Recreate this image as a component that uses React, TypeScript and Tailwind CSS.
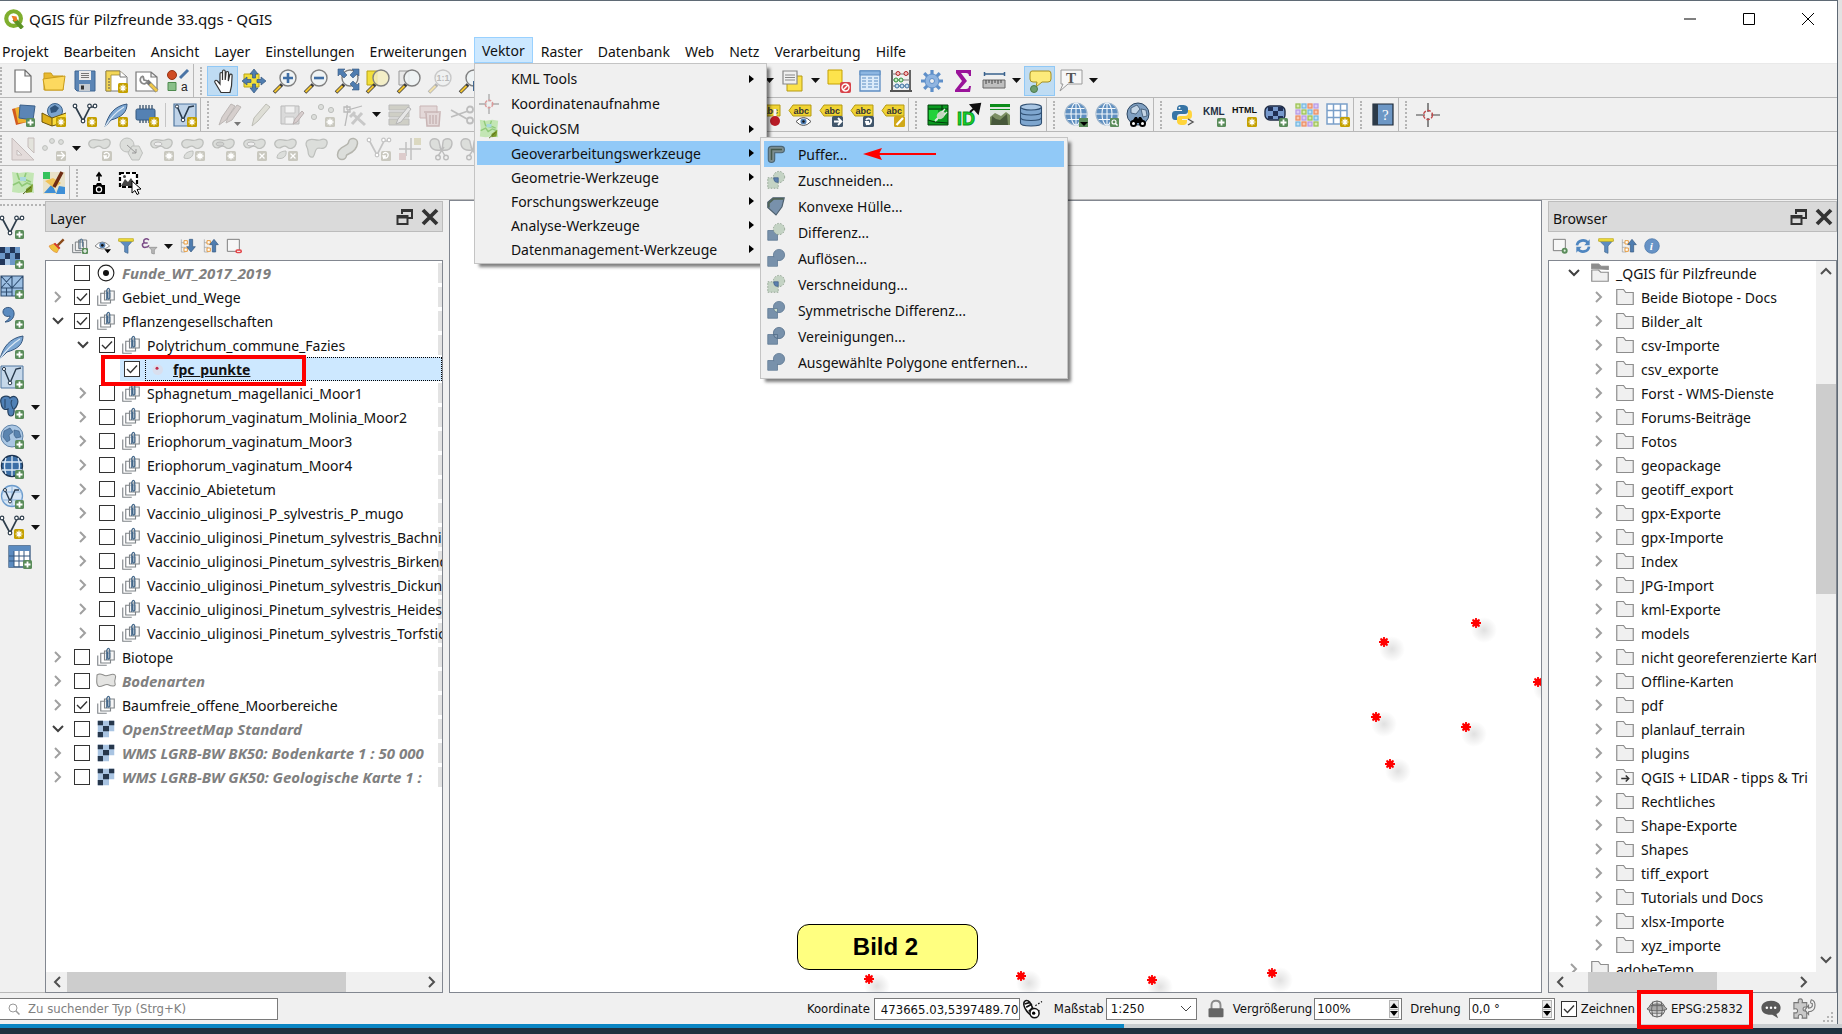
import React from 'react';

const Plus = () => (
  <g>
    <rect x="15" y="15" width="9" height="9" rx="1.5" fill="#5a8c5a" />
    <path d="M19.5 16.5v6M16.5 19.5h6" stroke="#fff" strokeWidth="1.8" />
  </g>
);

const Spark = () => (
  <g>
    <rect x="14" y="14" width="10" height="10" rx="1.5" fill="#c4a000" />
    <path d="M19 15.5v7M15.5 19h7M16.6 16.6l4.8 4.8M21.4 16.6l-4.8 4.8" stroke="#fff" strokeWidth="1.2" />
  </g>
);

const Lens = ({ fill = '#eef3f5' }: { fill?: string }) => (
  <g>
    <path d="M1 23.5l8-8" stroke="#3b3b3b" strokeWidth="3.6" />
    <path d="M1.500 23l6-6" stroke="#f0c330" strokeWidth="2.2" />
    <circle cx="15" cy="9" r="8" fill={fill} fillOpacity="0.85" stroke="#808080" strokeWidth="1.4" />
  </g>
);

const Globe = () => (
  <g fill="none" stroke="#f2f7fb" strokeWidth="1.1">
    <circle cx="12" cy="11" r="11" fill="#5f8fc0" stroke="#9fb6cc" />
    <ellipse cx="12" cy="11" rx="5" ry="11" />
    <path d="M12 0v22M1 11h22M3.500 5.500h17M3.500 16.500h17" />
  </g>
);

const Abc = () => (
  <g>
    <path d="M1 7.5L5 2h18v11H5z" fill="#f0d333" stroke="#b59a12" />
    <text x="5.5" y="11" fontSize="9" fontWeight="bold" fontFamily="Liberation Sans, sans-serif" fill="#333">abc</text>
  </g>
);

const Nodes = ({ color = '#2f3e4c' }: { color?: string }) => (
  <g fill="#fff" stroke={color} strokeWidth="1.2">
    <path d="M2 3l8 15L17 4h4" fill="none" strokeWidth="1.7" />
    <circle cx="2" cy="3" r="1.8" />
    <circle cx="10" cy="18" r="1.8" />
    <circle cx="16.500" cy="3" r="1.8" />
    <circle cx="22" cy="3" r="1.8" />
  </g>
);

const Blob = () => (
  <path d="M2 4c4-4 8 1 13-1 5-2 8 0 7 4s-6 6-9 3-5 1-8 1-6-4-3-7z" fill="#dcdedb" stroke="#bdbfbc" strokeWidth="1.2" />
);

const GrayBadge = ({ mark = 'M19 15.5v7M15.5 19h7M16.6 16.6l4.8 4.8M21.4 16.6l-4.8 4.8' }: { mark?: string }) => (
  <g>
    <rect x="14" y="14" width="10" height="10" rx="1.5" fill="#c9c8bf" stroke="none" />
    <path d={mark} stroke="#fff" strokeWidth="1.3" fill="none" />
  </g>
);

const DarkBadge = ({ mark }: { mark: string }) => (
  <g>
    <rect x="13" y="13" width="11" height="11" rx="1.5" fill="#41566b" />
    <path d={mark} stroke="#fff" strokeWidth="1.8" fill="none" />
  </g>
);

const OsmMap = () => (
  <g>
    <path d="M1 1l7 1 8-1 7 1-1 10 1 10-8-1-7 1-7-1 1-10z" fill="#c3e6b4" />
    <path d="M2 14l6-3 3 4 5-3 5 2M6 2l2 6 7 2M15 2l-2 6 7 3" stroke="#8fc978" fill="none" strokeWidth="1.6" />
    <path d="M9 6h6v4H9z" fill="#a9d8dd" />
    <path d="M15 18l7-5-1 8-6 1z" fill="#7a9a2a" />
    <path d="M12 23l8-7" stroke="#4f6618" />
  </g>
);

const Square = () => <path d="M1 10h13v13H1z" fill="#7891ab" stroke="#5b7590" />;

const xMark = 'M16.5 16.5l5 5M21.5 16.5l-5 5';
const arrowMark = 'M15 18.5h7M19 15l3.5 3.5L19 22';
const turnMark = 'M16 17c2-3 6-1 5 2s-3 2-4 1M17 22l-1-3 3 0';

const icons: Record<string, React.ReactNode> = {
  newFile: <path d="M4 1h10l6 6v16H4zM14 1v6h6" fill="#fff" stroke="#6e6e6e" strokeWidth="1.2" />,
  open: (
    <g stroke="#c99c1c">
      <path d="M2 21V4h7l2 3h10V21z" fill="#e8b92f" />
      <path d="M1 10l22-3-2 14H3z" fill="#fcd95f" />
    </g>
  ),
  save: (
    <g>
      <path d="M2 2h20v20H4l-2-2z" fill="#5b85b5" stroke="#3e6491" />
      <path d="M6 2h12v9H6z" fill="#ececec" />
      <path d="M8 4.5h8M8 6.5h8M8 8.5h8" stroke="#777" />
      <path d="M6 15h11v7H6z" fill="#c5cbd2" />
      <path d="M8 16.5h3v4H8z" fill="#333" />
    </g>
  ),
  layout: (
    <g>
      <path d="M2 2h14l7 6v14H2z" fill="#fff" stroke="#777" />
      <path d="M2 2h14l3 4H7v16H2z" fill="#f3d657" stroke="#9a8630" strokeWidth="0.8" />
      <path d="M16 2v6h6" fill="#fff" stroke="#777" />
      <path d="M4 10h2M4 13h2M4 16h2M4 19h2" stroke="#555" />
      <Spark />
    </g>
  ),
  layoutManager: (
    <g>
      <path d="M1 3h15l6 5v14H1zM16 3v5h6" fill="#fff" stroke="#777" strokeWidth="1.2" />
      <path d="M12 12l10 10" stroke="#777" strokeWidth="4" />
      <path d="M15 15l7 7" stroke="#edc64a" strokeWidth="3" />
      <path d="M8 7a4 4 0 1 0 5 5M8 7l1 4 4 1" fill="none" stroke="#888" strokeWidth="1.8" />
    </g>
  ),
  style: (
    <g>
      <circle cx="6" cy="6" r="4.5" fill="#cf4b22" stroke="#963313" />
      <path d="M14 9l8-8" stroke="#4a74a6" strokeWidth="3" />
      <path d="M2 13.5h8v8H2z" fill="#8abf8a" stroke="#4e8a4e" />
      <text x="15" y="22" fontSize="12" fontFamily="Liberation Sans, sans-serif" fill="#222">a</text>
    </g>
  ),
  hand: (
    <path
      d="M10 23.500l-6-10c-1-2 1-3 2.500-1.500L9 15V5c0-2 2.500-2 2.500 0v6V2.500c0-2 2.700-2 2.700 0V11l.8-7c0-2 2.600-2 2.600 0l-.3 8 1.400-6c.5-1.500 2.600-1 2.400.5L20.500 17 19 23.500z"
      fill="#fff"
      stroke="#333"
      strokeWidth="1.2"
    />
  ),
  panTo: (
    <g>
      <path d="M2 5h15v13H2z" fill="#f2df3a" stroke="#b9a415" />
      <path d="M12 0l4 5h-2.500v4h-3V5H8zM12 24l4-5h-2.500v-4h-3v4H8zM0 12l5-4v2.500h4v3H5V16zM24 12l-5-4v2.500h-4v3h4V16z" fill="#4f7db0" stroke="#35577f" strokeWidth="0.7" />
    </g>
  ),
  zoomIn: (
    <g>
      <Lens />
      <path d="M15 4v10M10 9h10" stroke="#3f6ea5" strokeWidth="2.6" />
    </g>
  ),
  zoomOut: (
    <g>
      <Lens />
      <path d="M10 9h10" stroke="#3f6ea5" strokeWidth="2.6" />
    </g>
  ),
  zoomFull: (
    <g>
      <Lens />
      <path d="M3 0h7L8 2l4 4-3 3-4-4-2 2zM24 0h-7l2 2-4 4 3 3 4-4 2 2zM24 21h-7l2-2-4-4 3-3 4 4 2-2z" fill="#4f7db0" stroke="#35577f" strokeWidth="0.6" />
    </g>
  ),
  zoomSelection: (
    <g>
      <path d="M1 2h10v14H1z" fill="#f2df3a" stroke="#b9a415" />
      <Lens fill="#f3edc0" />
    </g>
  ),
  zoomLayer: (
    <g>
      <path d="M2 2h10v14H2z" fill="#e8e8e8" stroke="#999" />
      <Lens />
    </g>
  ),
  zoomNative: (
    <g opacity="0.35">
      <Lens />
      <text x="8.500" y="12" fontSize="9" fontWeight="bold" fontFamily="Liberation Sans, sans-serif" fill="#555">1:1</text>
    </g>
  ),
  zoomLast: (
    <g>
      <Lens />
      <path d="M14 12h10v10H14z" fill="#41668f" />
    </g>
  ),
  mapTheme: (
    <g>
      <path d="M6 7h15v15H6z" fill="#fbe24a" stroke="#b59a12" />
      <path d="M2 2h14v13H2z" fill="#f0f0f0" stroke="#888" strokeWidth="1.2" />
      <path d="M4 6h10M4 8.500h10M4 11h10" stroke="#888" />
    </g>
  ),
  deselect: (
    <g>
      <path d="M1 1h14v14H1z" fill="#fde34c" stroke="#c4a000" />
      <rect x="13" y="13" width="11" height="11" rx="2" fill="#d8434a" />
      <circle cx="18.500" cy="18.500" r="3.500" fill="none" stroke="#fff" strokeWidth="1.4" />
      <path d="M16 21l5-5" stroke="#fff" strokeWidth="1.4" />
    </g>
  ),
  table: (
    <g stroke="#5d8dc2">
      <path d="M2 2h20v20H2z" fill="#dcebfa" strokeWidth="1.3" />
      <path d="M2 2h20v4H2z" fill="#8db6e2" />
      <path d="M4 9h4M4 12h4M4 15h4M4 18h4M10 9h4M10 12h4M10 15h4M10 18h4M16 9h4M16 12h4M16 15h4M16 18h4" />
    </g>
  ),
  abacus: (
    <g>
      <path d="M3 1v21M21 1v21M1 22h22" stroke="#555" strokeWidth="1.8" />
      <path d="M3 5h18M3 11h18M3 17h18" stroke="#777" />
      <g fill="#f3c1c1" stroke="#b02525">
        <circle cx="9" cy="4.500" r="2" /><circle cx="17" cy="4.500" r="2" />
      </g>
      <g fill="#c7ebc7" stroke="#2e8f3a">
        <circle cx="7" cy="11" r="2" /><circle cx="12" cy="11" r="2" />
      </g>
      <g fill="#c3dcf0" stroke="#3b6f9e">
        <circle cx="8" cy="17" r="2" /><circle cx="13" cy="17" r="2" /><circle cx="18" cy="17" r="2" />
      </g>
    </g>
  ),
  gear: (
    <g stroke="#5e8fc9">
      <path d="M12 1v22M1 12h22M4.200 4.200l15.600 15.600M19.800 4.200L4.200 19.800" strokeWidth="3.2" />
      <circle cx="12" cy="12" r="7" fill="#8fb4e0" />
      <circle cx="12" cy="12" r="2.500" fill="#efefef" />
    </g>
  ),
  sigma: <path d="M5 1h15v6h-2c0-2-1-3-3-3h-5l6 8-7 8h6c2 0 3-1 3-3h2l-1 6H4v-2l7-9-6-8z" fill="#9a139a" />,
  ruler: (
    <g>
      <path d="M2 5h21M2.500 3v4M22.500 3v4" stroke="#39618c" strokeWidth="1.5" />
      <path d="M1 11h22v8H1z" fill="#bfbfbf" stroke="#666" />
      <path d="M4 11v4M7 11v3M10 11v4M13 11v3M16 11v4M19 11v3" stroke="#444" />
    </g>
  ),
  mapTips: (
    <g>
      <path d="M4 2h17q2 0 2 3v5q0 3-3 3h-6l-6 5 1-5H5q-3 0-3-3V5q0-3 2-3z" fill="#fdeb7b" stroke="#a58e21" />
      <circle cx="6" cy="20" r="3.5" fill="#6e9e6e" stroke="#4c7a4c" />
    </g>
  ),
  annotation: (
    <g>
      <path d="M2 1h21v14H9l-8 7 3-7H2z" fill="#f7f7f7" stroke="#9a9a9a" />
      <text x="7" y="13.500" fontSize="15" fontWeight="bold" fontFamily="Liberation Serif, serif" fill="#555">T</text>
    </g>
  ),

  dataSource: (
    <g>
      <path d="M1 6l12-3 3 16-11 3z" fill="#d35a1f" />
      <path d="M4 5l12-2 2 16-11 1z" fill="#eeb32e" />
      <path d="M9 2l15 1-2 14-14-2z" fill="#5b85b5" stroke="#3b5f88" />
      <Plus />
    </g>
  ),
  geopackage: (
    <g>
      <circle cx="13" cy="8" r="7.500" fill="#7ba3cd" stroke="#3c638d" />
      <path d="M8 5l5-3 4 3-3 4-5 1z" fill="#31557c" />
      <path d="M0 10l10 5v8L0 19z" fill="#dfb01a" />
      <path d="M10 15l14-5v9l-14 4z" fill="#fbdc3e" />
      <path d="M0 10l10 5 14-5M10 15v8M0 10v9l10 4 14-4" stroke="#6d5508" fill="none" />
      <Spark />
    </g>
  ),
  newShape: <g><Nodes /><Spark /></g>,
  spatialite: (
    <g>
      <path d="M1 24C4 12 10 3 23 1c0 8-5 13-16 16z" fill="#7ea8d3" stroke="#35577f" />
      <path d="M1 24C6 15 12 9 20 4" stroke="#dce9f5" fill="none" strokeWidth="1.2" />
      <Spark />
    </g>
  ),
  memory: (
    <g>
      <path d="M5 2v18M8 2v18M11 2v18M14 2v18M17 2v18" stroke="#37516b" strokeWidth="1.3" />
      <rect x="1" y="6" width="19" height="11" rx="1.500" fill="#5481b3" stroke="#34597f" />
      <Spark />
    </g>
  ),
  virtual: (
    <g>
      <path d="M1 1h22v22H1z" fill="#bfd3e8" stroke="#50779f" strokeWidth="1.2" />
      <path d="M4 3l6 14L16 4l5-1" fill="none" stroke="#27394c" strokeWidth="1.6" />
      <circle cx="4" cy="3.500" r="1.600" fill="#fff" stroke="#27394c" />
      <circle cx="10" cy="17" r="1.800" fill="#fff" stroke="#27394c" />
      <Spark />
    </g>
  ),
  pencils: (
    <g>
      <path d="M1 22l3-8L13 1l4 2-9 14zM8 20l2-6L19 2l4 2-9 13z" fill="#d6cfcd" stroke="#bcb7b5" />
      <path d="M16 19h7l-3.500 4z" fill="#777" />
    </g>
  ),
  pencil: <path d="M3 23l2-8L17 1l4 3L9 18z" fill="#deded6" stroke="#bdbdb5" />,
  saveEdits: (
    <g>
      <path d="M1 3h18v18H1z" fill="#dadada" stroke="#b9b9b9" />
      <path d="M5 3h10v7H5zM5 14h9v7H5z" fill="#f2f2f2" stroke="#c6c6c6" />
      <path d="M13 21l2-5 7-8 2 2-7 9z" fill="#d9cfcf" stroke="#b9b0b0" />
    </g>
  ),
  points: (
    <g fill="#dcdedb" stroke="#bdbfbc">
      <circle cx="3" cy="14" r="2.600" /><circle cx="10" cy="4" r="2.600" /><circle cx="20" cy="7" r="2.600" />
      <GrayBadge />
    </g>
  ),
  vertexTool: (
    <g stroke="#b9b9b9" fill="none">
      <path d="M5 2v5M3 23L6 7l14-4M2 4h6v5H2z" strokeWidth="1.3" />
      <path d="M10 21L20 10M12 12l11 10M8 14l5-5" strokeWidth="3" stroke="#c8c8c8" />
    </g>
  ),
  attributes: (
    <g>
      <path d="M1 2h20v5H1zM1 9h20v5H1zM1 16h20v6H1z" fill="#cfcfc6" stroke="#bbb" />
      <path d="M8 21l2-5L20 4l3 2-10 13z" fill="#e6e6e6" stroke="#b5b5b5" />
    </g>
  ),
  trash: (
    <g fill="#e3d8d8" stroke="#c9b5b5">
      <path d="M1 3h17v12H1z" />
      <path d="M5 9h17M7 10l1 13h12l1-13M11 12v9M14 12v9M17 12v9" strokeWidth="1.5" />
    </g>
  ),
  scissors: (
    <g fill="none" stroke="#bdbdbd" strokeWidth="1.8">
      <path d="M1 7l16 9M1 14l17-6" />
      <circle cx="20" cy="6.500" r="3" /><circle cx="20" cy="17.500" r="3" />
    </g>
  ),

  labelPin: (
    <g>
      <Abc />
      <path d="M18 6v9" stroke="#f5f5f5" strokeWidth="3" />
      <circle cx="18" cy="18" r="5" fill="#b81b26" />
    </g>
  ),
  labelShow: (
    <g>
      <Abc />
      <path d="M8 18.500q7.500-8 15 0-7.500 8-15 0z" fill="#fff" stroke="#555" />
      <circle cx="15.500" cy="18.500" r="3" fill="#4f7fb5" />
      <circle cx="15.500" cy="18.500" r="1.200" fill="#111" />
    </g>
  ),
  labelMove: <g><Abc /><DarkBadge mark={arrowMark} /></g>,
  labelRotate: <g><Abc /><DarkBadge mark={turnMark} /></g>,
  labelEdit: (
    <g>
      <Abc />
      <rect x="13" y="13" width="11" height="11" rx="1.500" fill="#d0a818" />
      <path d="M15.500 22l6.500-7" stroke="#fff" strokeWidth="2.2" />
    </g>
  ),
  plugGreen: (
    <g>
      <path d="M2 2h20v20H2z" fill="#0a9a20" stroke="#04450d" />
      <path d="M3 7h9v11H3z" fill="#21d13b" />
      <path d="M2 6h20M2 17l7 2 13 1M16 2v5" stroke="#043d0c" strokeWidth="1.2" fill="none" />
      <path d="M9 18l5-5" stroke="#e3ebe3" strokeWidth="2" />
      <ellipse cx="15" cy="12" rx="4.500" ry="3.500" fill="#c3d6c0" transform="rotate(-45 15 12)" />
      <path d="M16 9l3-3M18 12l3-3" stroke="#e3ebe3" strokeWidth="1.4" />
    </g>
  ),
  idArrow: (
    <g>
      <text x="0" y="22" fontSize="18" fontWeight="bold" fontFamily="Liberation Sans, sans-serif" fill="#12d62a" stroke="#0b8a1c" strokeWidth="0.8">ID</text>
      <path d="M13 9l7-6M14 2l9-1-2 9z" stroke="#111" strokeWidth="2" fill="#111" />
    </g>
  ),
  landscape: (
    <g>
      <path d="M2 2h20v20H2z" fill="#dfe6df" />
      <path d="M2 1h20v3H2zM2 6h20v1H2z" fill="#0b8c1a" />
      <path d="M2 14l5-4 6 3 5-4 4 3v10H2z" fill="#7b8f62" />
      <path d="M3 22l1-9 4 3 4 1 7-6 1 11z" fill="#47583a" />
    </g>
  ),
  database: (
    <g fill="#7ea6cf" stroke="#2f4f72" strokeWidth="1.1">
      <path d="M1.500 4v16c0 4 21 4 21 0V4" />
      <path d="M1.500 14.500c0 4 21 4 21 0M1.500 9c0 4 21 4 21 0" fill="none" />
      <ellipse cx="12" cy="4" rx="10.500" ry="3" fill="#a9c6e3" />
    </g>
  ),
  globeDown: (
    <g>
      <Globe />
      <rect x="15" y="15" width="9" height="9" fill="#5a8c5a" />
      <path d="M16 19h8l-4 4z" fill="#000" />
    </g>
  ),
  globeSearch: (
    <g>
      <Globe />
      <rect x="15" y="15" width="9" height="9" rx="1" fill="#5a8c5a" />
      <circle cx="19" cy="19" r="2" fill="none" stroke="#fff" strokeWidth="1.2" />
      <path d="M20.500 20.500l2 2" stroke="#fff" strokeWidth="1.4" />
    </g>
  ),
  binoculars: (
    <g>
      <circle cx="12" cy="11" r="11" fill="#7f9fc0" stroke="#2c4560" />
      <path d="M5 5l6-3 3 4-4 5-5-1zM15 6l5 1 1 6-4 1z" fill="#c5d6e6" stroke="#2c4560" strokeWidth="0.7" />
      <path d="M5 20l4-6h2l1 2 1-2h2l4 6z" fill="#000" />
      <circle cx="7.500" cy="20.500" r="3.500" /><circle cx="16.500" cy="20.500" r="3.500" />
      <circle cx="7.500" cy="20.500" r="1.500" fill="#fff" /><circle cx="16.500" cy="20.500" r="1.500" fill="#fff" />
    </g>
  ),
  python: (
    <g>
      <path d="M11 2c-5 0-5 2-5 5h5v1H4c-3 0-3 3-3 4 0 2 0 5 3 5h2v-3c0-2 1-3 3-3h5c2 0 3-1 3-3V6c0-3-2-4-6-4z" fill="#3774a5" />
      <path d="M11 22c5 0 5-2 5-5h-5v-1h7c3 0 3-3 3-4 0-2 0-5-3-5h-1v3c0 2-1 3-3 3H9c-2 0-3 1-3 3v2c0 3 2 4 5 4z" fill="#ffd43b" />
      <circle cx="8.500" cy="4.800" r="1" fill="#fff" />
      <path d="M17 16l5 3-5 3" fill="none" stroke="#555" strokeWidth="1.4" />
    </g>
  ),
  kml: (
    <g>
      <text x="1" y="12" fontSize="10" fontWeight="bold" fontFamily="Liberation Sans, sans-serif" fill="#222f44">KML</text>
      <Plus />
    </g>
  ),
  html: (
    <g>
      <text x="-1" y="10" fontSize="9" fontWeight="bold" fontFamily="Liberation Sans, sans-serif" fill="#111">HTML</text>
      <Spark />
    </g>
  ),
  rasterAdd: (
    <g>
      <rect x="1" y="3" width="20" height="14" rx="5" fill="#7799cc" stroke="#1f2b44" strokeWidth="1.4" />
      <path d="M4 4h5v4H4zM14 4h5v4h-5zM9 8h5v5H9zM4 13h5v3H4zM14 13h5v3h-5z" fill="#1f2f55" />
      <Plus />
    </g>
  ),
  colorGrid: (
    <g strokeWidth="1.3">
      {[0, 1, 2, 3].map((r) =>
        [0, 1, 2, 3].map((c) => (
          <rect
            key={`${r}${c}`}
            x={1 + c * 6}
            y={1 + r * 6}
            width="4"
            height="4"
            fill={['#d8ecae', '#bfe2f7', '#f9c9b0', '#dccbf5'][(c + r * 3) % 4]}
            stroke={['#9cc255', '#74b7e2', '#ec8d63', '#b79be6'][(c + r * 3) % 4]}
          />
        ))
      )}
    </g>
  ),
  blueGrid: (
    <g>
      <path d="M1 1h20v20H1zM1 7.500h20M1 14.500h20M7.500 1v20M14.500 1v20" fill="#fff" stroke="#7ba0c9" strokeWidth="1.5" />
      <Spark />
    </g>
  ),
  help: (
    <g>
      <path d="M2 1h20v21H2z" fill="#6d97c5" stroke="#1d2936" strokeWidth="1.2" />
      <path d="M2 1h5v21H2z" fill="#2c3a48" />
      <text x="11" y="17" fontSize="15" fontFamily="Liberation Serif, serif" fill="#fff">?</text>
    </g>
  ),
  crosshair: (
    <g fill="none">
      <path d="M12 0v9M12 15v9M0 12h9M15 12h9" stroke="#444" strokeWidth="1.2" />
      <circle cx="12" cy="12" r="4.500" stroke="#c0494b" strokeWidth="1.4" strokeDasharray="3.5 1.5" />
    </g>
  ),
  crosshairPale: (
    <g fill="none">
      <path d="M12 0v9M12 15v9M0 12h9M15 12h9" stroke="#aaa" strokeWidth="1.6" />
      <circle cx="12" cy="12" r="4.500" stroke="#dc9a9a" strokeWidth="1.8" strokeDasharray="3.5 1.5" />
    </g>
  ),

  advDigitize: (
    <g fill="#e4dcdb" stroke="#c5bcbb">
      <path d="M1 1v22h22zM6 13v5h5z" fillRule="evenodd" />
      <path d="M17 1h6v15l-6-6z" fill="#e3e3dc" />
    </g>
  ),
  movePoints: (
    <g fill="#dcdedb" stroke="#bdbfbc">
      <circle cx="3" cy="11" r="2.400" /><circle cx="10" cy="4" r="2.400" /><circle cx="19" cy="5" r="2.400" />
      <GrayBadge mark={arrowMark} />
    </g>
  ),
  rotate: <g><Blob /><GrayBadge mark={turnMark} /></g>,
  simplify: (
    <g fill="#dcdedb" stroke="#bdbfbc">
      <circle cx="8" cy="8" r="7" />
      <path d="M9 16l4-7h7l3.500 7-3.500 7h-7z" />
      <path d="M8 8l9 8M17 12v4h-4" stroke="#999" fill="none" />
    </g>
  ),
  addRing: <g><Blob /><ellipse cx="8" cy="7" rx="4" ry="2" fill="#efefef" stroke="#bbb" /><GrayBadge /></g>,
  addPart: <g><Blob /><path d="M3 21c0-5 5-7 9-7 1 5-3 9-9 7z" fill="#dcdedb" stroke="#bdbfbc" /><GrayBadge /></g>,
  fillRing: <g><Blob /><ellipse cx="8" cy="7" rx="4" ry="2" fill="#d0d2cf" stroke="#bbb" /><GrayBadge /></g>,
  deleteRing: <g><Blob /><ellipse cx="8" cy="7" rx="4" ry="2" fill="#efefef" stroke="#bbb" /><GrayBadge mark={xMark} /></g>,
  deletePart: <g><Blob /><path d="M3 21c0-5 5-7 9-7 1 5-3 9-9 7z" fill="#dcdedb" stroke="#bdbfbc" /><GrayBadge mark={xMark} /></g>,
  reshape: <path d="M2 4c4-4 8 0 13-1 5-2 8 0 7 4s-4 5-8 4c-5 0-3 6-6 9-3 1-5-2-5-6s-4-6-1-10z" fill="#dcdedb" stroke="#bdbfbc" strokeWidth="1.2" />,
  offset: (
    <g fill="none">
      <path d="M6 18c0-6 10-4 11-12" stroke="#b5b5ae" strokeWidth="10.5" strokeLinecap="round" />
      <path d="M6 18c0-6 10-4 11-12" stroke="#dcdedb" strokeWidth="7.5" strokeLinecap="round" />
    </g>
  ),
  reverse: <g><Nodes color="#c4c4c4" /><GrayBadge mark={turnMark} /></g>,
  trim: (
    <g>
      <path d="M13 1v22M1 12h22M8 5v14" stroke="#c0c0c0" strokeWidth="1.5" />
      <rect x="16" y="1" width="7" height="7" fill="#dbd8c0" /><rect x="1" y="16" width="7" height="7" fill="#dcc" />
    </g>
  ),
  split: (
    <g fill="none" stroke="#bdbdbd" strokeWidth="1.4">
      <path d="M1 6c0-6 9-5 9-1l2 8c-6 1-11-1-11-7zM23 6c0-6-9-5-9-1l-1 8c6 1 10-1 10-7z" fill="#dcdedb" />
      <path d="M15 10l-6 9M11 10l5 9" /><circle cx="9" cy="20.500" r="2.300" /><circle cx="17" cy="20.500" r="2.300" />
    </g>
  ),

  osm: <OsmMap />,
  osmPen: (
    <g>
      <path d="M1 1l22 0v22H1z" fill="#e9e2c9" />
      <path d="M1 1h7v7H1z" fill="#35c25c" />
      <path d="M2 22l8-9 4 9zM14 23l3-8 6 1v7z" fill="#3f8fd6" />
      <path d="M3 10l8-3 8 5-7 5z" fill="#f0c255" />
      <path d="M12 16l8-15" stroke="#6e2c14" strokeWidth="3.5" />
    </g>
  ),
  camera: (
    <g>
      <path d="M12 10V3M9.500 5.500L12 2l2.500 3.500" stroke="#000" strokeWidth="1.6" fill="none" />
      <path d="M6 14h3l1-2h4l1 2h3v9H6z" fill="#000" />
      <circle cx="12" cy="18.500" r="2.600" fill="none" stroke="#fff" strokeWidth="1.2" />
    </g>
  ),
  imageSelect: (
    <g>
      <path d="M2 2h17v14H2z" fill="#fff" stroke="#000" strokeWidth="2.2" strokeDasharray="4 2" />
      <path d="M3 15l4-7 3 3 3-4 5 8z" fill="#444" />
      <circle cx="6.500" cy="5.500" r="1.500" fill="#444" />
      <path d="M14 10l9 8-4 .5 2 4-2 1-2-4-3 2.500z" fill="#fff" stroke="#000" />
    </g>
  ),

  vectorAdd: <g><Nodes /><Plus /></g>,
  rasterLayer: (
    <g>
      <path d="M0 2h20v18H0z" fill="#6b97c8" />
      <path d="M0 2h5v6H0zM10 2h5v6h-5zM5 8h5v6H5zM15 8h5v6h-5zM0 14h5v6H0z" fill="#22375a" />
      <path d="M5 14h5v6H5z" fill="#a8c6e6" />
      <Plus />
    </g>
  ),
  meshAdd: (
    <g>
      <path d="M1 1h22v20H1zM1 13h22M12 1v20M1 1l11 12M12 1L1 13M12 13L23 1M1 17h11M6.500 13v8" fill="#9cbfe2" stroke="#2e4c6f" strokeWidth="1.1" />
      <Plus />
    </g>
  ),
  comma: (
    <g>
      <path d="M4 4c5-4 11 0 10 6-1 5-5 7-9 7 3-2 5-4 5-6-5 2-9-3-6-7z" fill="#5b8bc0" stroke="#35577f" />
      <Plus />
    </g>
  ),
  featherAdd: (
    <g>
      <path d="M0 24C3 12 10 3 23 1c0 8-5 13-16 16z" fill="#7ea8d3" stroke="#35577f" />
      <path d="M0 24C6 15 12 9 20 4" stroke="#dce9f5" fill="none" strokeWidth="1.2" />
      <Plus />
    </g>
  ),
  virtualAdd: (
    <g>
      <path d="M1 1h22v22H1z" fill="#c6d8ea" stroke="#50779f" />
      <path d="M4 4l6 14L16 4l5-1" fill="none" stroke="#27394c" strokeWidth="1.4" />
      <circle cx="4" cy="4" r="1.600" fill="#fff" stroke="#27394c" /><circle cx="10" cy="18" r="1.800" fill="#fff" stroke="#27394c" />
      <Plus />
    </g>
  ),
  postgis: (
    <g>
      <path d="M1 8c-2-8 8-8 9-5 4-4 10 0 7 7-1 3-3 4-3 4s1 7-3 7-3-7-3-7-6 3-7-6z" fill="#4f80b6" stroke="#25405f" strokeWidth="1.2" />
      <path d="M5 4v9M12 5c-2 3 0 6 1 9" stroke="#25405f" fill="none" />
      <Plus />
    </g>
  ),
  wmsAdd: (
    <g>
      <circle cx="12" cy="11" r="11" fill="#a9c6e3" stroke="#5f83a8" />
      <path d="M4 6l6-3 3 4-4 3 1 5-3 2-4-5zM14 5l5 1 2 6-5 1-2-3z" fill="#5b85b0" stroke="#35577f" strokeWidth="0.6" />
      <Plus />
    </g>
  ),
  wcsAdd: (
    <g>
      <circle cx="12" cy="11" r="10.500" fill="#3b6ea6" stroke="#1d3552" strokeWidth="1.3" />
      <path d="M2 7h20M2 15h20M12 1v20M6 3q-3 8 0 16M18 3q3 8 0 16" fill="none" stroke="#dce9f5" strokeWidth="1.3" />
      <Plus />
    </g>
  ),
  wfsAdd: (
    <g>
      <circle cx="12" cy="11" r="10.500" fill="#d7e6f5" stroke="#6c9ccd" strokeWidth="1.3" />
      <path d="M2 7h20M2 15h20M12 1v20" stroke="#8db3dc" />
      <path d="M5 5l5 11 5-11h4" fill="none" stroke="#27394c" strokeWidth="1.4" />
      <circle cx="5" cy="5" r="1.500" fill="#fff" stroke="#27394c" /><circle cx="10" cy="16.500" r="1.500" fill="#fff" stroke="#27394c" />
      <Plus />
    </g>
  ),
  tableAdd: (
    <g>
      <path d="M1 1h21v21H1z" fill="#fff" stroke="#35577f" strokeWidth="1.3" />
      <path d="M1 1h21v5H1zM1 1h5v21H1z" fill="#5b8bc0" />
      <path d="M6 6v16M11 6v16M16 6v16M1 11h21M1 16h21" stroke="#35577f" />
      <Plus />
    </g>
  ),

  brush: (
    <g>
      <path d="M13 11l9-9" stroke="#8b4a1a" strokeWidth="3.5" />
      <path d="M0 12l9-4 7 6-4 8c-5-1-9-4-12-10z" fill="#f0c23c" stroke="#e08a3a" />
      <path d="M8 8l8 8" stroke="#d3372f" strokeWidth="3" />
    </g>
  ),
  groupAdd: (
    <g>
      <path d="M1 9v13h13M5 6h12v13H5zM10 3h12v13H10z" fill="none" stroke="#7b8084" strokeWidth="1.5" />
      <path d="M12 17V4q2-5 4 0v9" fill="none" stroke="#52728f" strokeWidth="1.6" />
      <Plus />
    </g>
  ),
  eye: (
    <g>
      <path d="M0 12q11-12 22 0-11 9-22 0z" fill="#fff" stroke="#777" strokeWidth="1.3" />
      <circle cx="11" cy="11" r="4.500" fill="#5b85b5" /><circle cx="11" cy="11" r="2" fill="#111" />
      <path d="M14 17h10l-5 6z" fill="#000" />
    </g>
  ),
  funnel: (
    <g>
      <path d="M1 3h22l-8 9v11l-5-2v-9z" fill="#5e8cc0" stroke="#3c638d" />
      <path d="M1 1h22v4H1z" fill="#f2df3a" stroke="#b9a415" />
    </g>
  ),
  expression: (
    <g>
      <path d="M12 3C7-1 2 3 5 7c-5 2-3 8 2 7 3 0 4-1 5-3M5 7.500h5" fill="none" stroke="#7a4a86" strokeWidth="2.2" />
      <path d="M12 14h12l-4 4v6l-4-1v-5z" fill="#b8b8b8" stroke="#888" />
    </g>
  ),
  expand: (
    <g>
      <path d="M2 2v19h6M2 7h6M2 14h6" fill="none" stroke="#999" />
      <path d="M6 4h5v5H6zM6 15h5v5H6z" fill="#fff" stroke="#e79a3c" strokeWidth="1.5" />
      <path d="M14 2h5v11h4l-6.500 8L10 13h4z" fill="#4f7db0" stroke="#35577f" />
    </g>
  ),
  collapse: (
    <g>
      <path d="M2 2v19h6M2 7h6M2 14h6" fill="none" stroke="#999" />
      <path d="M6 4h5v5H6zM6 15h5v5H6z" fill="#fff" stroke="#e79a3c" strokeWidth="1.5" />
      <path d="M14 21h5V10h4l-6.500-8L10 10h4z" fill="#4f7db0" stroke="#35577f" />
    </g>
  ),
  removeLayer: (
    <g>
      <path d="M2 2h18v18H2z" fill="#f7f7f7" stroke="#777" strokeWidth="1.4" />
      <rect x="14" y="17" width="10" height="6" rx="3" fill="#e2474b" />
      <path d="M16.500 20h5" stroke="#fff" strokeWidth="1.5" />
    </g>
  ),
  addItem: (
    <g>
      <path d="M2 2h18v17H2z" fill="#f7f7f7" stroke="#777" strokeWidth="1.4" />
      <circle cx="19" cy="19" r="4.500" fill="#5a8c5a" /><circle cx="19" cy="19" r="1.600" fill="#dff0df" />
    </g>
  ),
  refresh: (
    <g fill="none" stroke="#4f86c0" strokeWidth="4">
      <path d="M3 11c1-8 12-10 17-3M21 13c-1 8-12 10-17 3" />
      <path d="M22 2v9h-8zM2 22v-9h8z" fill="#4f86c0" stroke="none" />
    </g>
  ),
  info: (
    <g>
      <circle cx="12" cy="12" r="11" fill="#6793c6" stroke="#4672a5" />
      <text x="8.500" y="18" fontSize="17" fontStyle="italic" fontWeight="bold" fontFamily="Liberation Serif, serif" fill="#fff">i</text>
    </g>
  ),

  group: (
    <g fill="none" stroke="#7f8488" strokeWidth="1.5">
      <path d="M1 10v13h12M5 7h13v13H5z" />
      <path d="M10 4h13v12H10z" fill="#f2f2f2" fillOpacity="0.6" />
      <path d="M13 16V3q2.500-5 4 0v10q-1.500 4-2.500 0V5" stroke="#45688a" strokeWidth="1.6" />
    </g>
  ),
  radio: (
    <g>
      <circle cx="12" cy="12" r="10.500" fill="#fff" stroke="#222" strokeWidth="1.5" />
      <circle cx="12" cy="12" r="4" fill="#111" />
    </g>
  ),
  point: (
    <g>
      <circle cx="13" cy="13" r="7" fill="#d9dfee" />
      <circle cx="12" cy="11" r="2" fill="#c0284a" />
    </g>
  ),
  polygon: <path d="M0 4c5-4 8 1 12 1s9-4 12-1-2 6 0 11-5 4-9 2-9 4-13 2-2-9-2-15z" fill="#e4e4e2" stroke="#8e8e8c" strokeWidth="1.4" />,
  wms: (
    <g>
      <path d="M1 1h22v22H1z" fill="#a9c4e2" />
      <path d="M1 1h7v6H1zM16 1h7v6h-7zM8 8h8v7H8zM1 16h7v7H1z" fill="#26374c" />
      <path d="M16 15h8v9h-8z" fill="#fff" />
    </g>
  ),
  folder: <path d="M1 22V2h9l3 4h10v16z" fill="#f0f0f0" stroke="#8d8d8d" strokeWidth="1.6" />,
  folderOpen: (
    <g stroke="#8d8d8d" strokeWidth="1.6">
      <path d="M1 6V0h9l3 3h10v4z" fill="#8d8d8d" />
      <path d="M1 23V8h9l3 3h10v12z" fill="#f0f0f0" />
    </g>
  ),
  folderLink: (
    <g>
      <path d="M1 22V2h9l3 4h10v16z" fill="#f4f4f4" stroke="#8d8d8d" strokeWidth="1.6" />
      <path d="M7 14h10M13 10l4 4-4 4" fill="none" stroke="#333" strokeWidth="2" />
    </g>
  ),

  buffer: (
    <g fill="none">
      <path d="M6 19V6h13" stroke="#4c6675" strokeWidth="10" strokeLinejoin="round" strokeLinecap="round" />
      <path d="M6 19V6h13" stroke="#7b8d8f" strokeWidth="7" strokeLinejoin="round" strokeLinecap="round" />
      <path d="M6 20V6h14" stroke="#44584a" strokeWidth="2" />
    </g>
  ),
  clip: (
    <g>
      <path d="M1 9h14v14H1z" fill="#c4d3c4" stroke="#7d927d" strokeDasharray="2 2" />
      <circle cx="16" cy="8" r="7.500" fill="#c4d3c4" stroke="#7d927d" strokeDasharray="2 2" />
      <path d="M9 9h6v6q-6 1-6-6z" fill="#5b7fae" stroke="#44618a" />
    </g>
  ),
  hull: (
    <g>
      <path d="M8 1h15l-3 12-8 11L1 14V7z" fill="#7891ab" stroke="#4d5f6d" strokeWidth="1.5" />
      <path d="M2.500 14V8L9 2.500h13" fill="none" stroke="#4f6355" strokeWidth="2.2" />
    </g>
  ),
  difference: (
    <g>
      <Square />
      <circle cx="16" cy="8" r="7.500" fill="#c4d3c4" stroke="#7d927d" strokeDasharray="2 2" />
    </g>
  ),
  dissolve: (
    <g>
      <Square />
      <circle cx="16" cy="8" r="7.500" fill="#7891ab" stroke="#5b7590" />
      <path d="M2 11h11.500v11.500H2z" fill="#7891ab" />
    </g>
  ),
  symDiff: (
    <g>
      <Square />
      <circle cx="16" cy="8" r="7.500" fill="#7891ab" stroke="#5b7590" />
      <path d="M9 10h5v5q-5 0-5-5z" fill="#cbdccb" stroke="#5b7590" />
    </g>
  ),
  union: (
    <g>
      <Square />
      <circle cx="16" cy="8" r="7.500" fill="#7891ab" stroke="#4f6a86" />
      <path d="M9 10h5v5q-5 0-5-5z" fill="#8aa0b7" stroke="#4f6a86" />
    </g>
  ),

  tracker: (
    <g>
      <path d="M3 3c3-3 6 0 8 4l4 8-4 4C6 17 0 7 3 3z" fill="#fff" stroke="#111" strokeWidth="1.8" />
      <path d="M3 6l7-2M5 10l7-4M8 15l5-5" stroke="#111" strokeWidth="2" />
      <path d="M16 8l8-5M19 14h4" stroke="#111" strokeWidth="1.5" strokeDasharray="2 2" />
      <circle cx="15" cy="17" r="5.500" fill="#fff" stroke="#111" strokeWidth="1.8" />
      <circle cx="14" cy="17" r="2" />
    </g>
  ),
  lock: (
    <g>
      <path d="M6 12V7q0-6 6-6t6 6v5" fill="none" stroke="#8c8c8c" strokeWidth="2.6" />
      <rect x="2" y="11" width="20" height="12" rx="1.500" fill="#666" />
    </g>
  ),
  crs: (
    <g fill="none" stroke="#666" strokeWidth="1.2">
      <circle cx="12" cy="12" r="9.500" fill="#e2e2e2" />
      <path d="M0 12C4 7 8 6 12 6s8 1 12 6c-4 3-20 3-24 0z" fill="#a9a9a9" />
      <path d="M12 2v20M7 3q-3 9 0 18M17 3q3 9 0 18M4 17h16M5 8h14" />
    </g>
  ),
  bubble: (
    <g>
      <path d="M12 2c7 0 11.500 3.500 11.500 8.500 0 4-2 6.500-5 7.500l2 5-7-4C5 19.500.5 16 .5 10.500.5 5.500 5 2 12 2z" fill="#595959" />
      <circle cx="7" cy="10.500" r="1.500" fill="#fff" /><circle cx="12" cy="10.500" r="1.500" fill="#fff" /><circle cx="17" cy="10.500" r="1.500" fill="#fff" />
    </g>
  ),
  puzzle: (
    <g fill="#c9c9c9" stroke="#777" strokeWidth="1.2">
      <path d="M1 5h5q-1-4 2-4t2 4h5v5q-4-1-4 2t4 2v8H10q1-4-2-4t-2 4H1v-6q4 1 4-2t-4-2z" />
      <path d="M13 13l4-5v3q5 0 4-5-3 0-1-4 4 1 4 6 0 7-7 7v3z" fill="#efefef" />
    </g>
  ),
  search: (
    <g fill="none" stroke="#999">
      <circle cx="10" cy="10" r="8" strokeWidth="2" />
      <path d="M16 16l7 7" strokeWidth="3" />
    </g>
  ),
};

function Icon({ name, className = 'w-6 h-6' }: { name: string; className?: string }) {
  return (
    <svg viewBox="0 0 24 24" className={`${className} shrink-0 overflow-visible`} aria-hidden="true">
      {icons[name]}
    </svg>
  );
}

type Direction = 'left' | 'right' | 'up' | 'down';

const chevrons: Record<Direction, string> = {
  left: 'M9 1L4 6l5 5',
  right: 'M3 1l5 5-5 5',
  up: 'M1 8l5-5 5 5',
  down: 'M1 3l5 5 5-5',
};

function Chevron({ dir, color = '#505050' }: { dir: Direction; color?: string }) {
  return (
    <svg viewBox="0 0 12 12" className="w-3 h-3 shrink-0" aria-hidden="true">
      <path d={chevrons[dir]} fill="none" stroke={color} strokeWidth="2" />
    </svg>
  );
}

function Caret() {
  return (
    <svg viewBox="0 0 9 5" className="w-[9px] h-[5px] shrink-0" aria-hidden="true">
      <path d="M0 0h9L4.500 5z" fill="#111" />
    </svg>
  );
}

// '|' is a separator line, 'v' a drop-down caret, '_' room taken by tools under the open menu
function Toolbar({ items, active = [], first, last }: { items: string[]; active?: string[]; first?: boolean; last?: boolean }) {
  return (
    <div className={`flex items-center h-full shrink-0 ${last ? 'grow' : 'border-r border-[#b8b8b8]'}`}>
      <span className={`h-7 shrink-0 ${first ? 'w-[7px]' : 'w-[7px] ml-1.5'}`}>
        <span className="block w-0 h-full border-l-2 border-dotted border-[#b5b5b5]" />
      </span>
      {items.map((item, i) => {
        if (item === '|') return <span key={i} className="w-px h-6 mx-[3px] bg-[#c5c5c5]" />;
        if (item === '_') return <span key={i} className="w-[276px]" />;
        if (item === 'v') {
          return (
            <button key={i} aria-label="Mehr" className="w-[15px] h-[30px] flex items-center justify-center">
              <Caret />
            </button>
          );
        }
        return (
          <button
            key={i}
            aria-label={item}
            className={`w-[31px] h-[30px] flex items-center justify-center shrink-0 ${
              active.includes(item) ? 'bg-[#bfdcf3] border border-[#90c8f6]' : ''
            }`}
          >
            <Icon name={item} />
          </button>
        );
      })}
    </div>
  );
}

const sideTools: [string, boolean][] = [
  ['vectorAdd', false],
  ['rasterLayer', false],
  ['meshAdd', false],
  ['comma', false],
  ['featherAdd', false],
  ['virtualAdd', false],
  ['postgis', true],
  ['wmsAdd', true],
  ['wcsAdd', false],
  ['wfsAdd', true],
  ['newShape', true],
];

const menus = ['Projekt', 'Bearbeiten', 'Ansicht', 'Layer', 'Einstellungen', 'Erweiterungen', 'Vektor', 'Raster', 'Datenbank', 'Web', 'Netz', 'Verarbeitung', 'Hilfe'];

const vectorMenu = [
  { label: 'KML Tools', sub: true, tall: true },
  { label: 'Koordinatenaufnahme', icon: 'crosshairPale', tall: true },
  { label: 'QuickOSM', icon: 'osm', sub: true, tall: true },
  { label: 'Geoverarbeitungswerkzeuge', sub: true },
  { label: 'Geometrie-Werkzeuge', sub: true },
  { label: 'Forschungswerkzeuge', sub: true },
  { label: 'Analyse-Werkzeuge', sub: true },
  { label: 'Datenmanagement-Werkzeuge', sub: true },
];

const geoMenu = [
  ['Puffer...', 'buffer'],
  ['Zuschneiden...', 'clip'],
  ['Konvexe Hülle...', 'hull'],
  ['Differenz...', 'difference'],
  ['Auflösen...', 'dissolve'],
  ['Verschneidung...', 'clip'],
  ['Symmetrische Differenz...', 'symDiff'],
  ['Vereinigungen...', 'union'],
  ['Ausgewählte Polygone entfernen...', 'dissolve'],
];

interface LayerNode {
  name: string;
  level: 0 | 1 | 2;
  icon: string;
  arrow?: Direction;
  checked?: boolean;
  muted?: boolean;
  selected?: boolean;
}

const layers: LayerNode[] = [
  { name: 'Funde_WT_2017_2019', level: 0, icon: 'radio', muted: true },
  { name: 'Gebiet_und_Wege', level: 0, icon: 'group', arrow: 'right', checked: true },
  { name: 'Pflanzengesellschaften', level: 0, icon: 'group', arrow: 'down', checked: true },
  { name: 'Polytrichum_commune_Fazies', level: 1, icon: 'group', arrow: 'down', checked: true },
  { name: 'fpc_punkte', level: 2, icon: 'point', checked: true, selected: true },
  { name: 'Sphagnetum_magellanici_Moor1', level: 1, icon: 'group', arrow: 'right' },
  { name: 'Eriophorum_vaginatum_Molinia_Moor2', level: 1, icon: 'group', arrow: 'right' },
  { name: 'Eriophorum_vaginatum_Moor3', level: 1, icon: 'group', arrow: 'right' },
  { name: 'Eriophorum_vaginatum_Moor4', level: 1, icon: 'group', arrow: 'right' },
  { name: 'Vaccinio_Abietetum', level: 1, icon: 'group', arrow: 'right' },
  { name: 'Vaccinio_uliginosi_P_sylvestris_P_mugo', level: 1, icon: 'group', arrow: 'right' },
  { name: 'Vaccinio_uliginosi_Pinetum_sylvestris_Bachni', level: 1, icon: 'group', arrow: 'right' },
  { name: 'Vaccinio_uliginosi_Pinetum_sylvestris_Birkend', level: 1, icon: 'group', arrow: 'right' },
  { name: 'Vaccinio_uliginosi_Pinetum_sylvestris_Dickung', level: 1, icon: 'group', arrow: 'right' },
  { name: 'Vaccinio_uliginosi_Pinetum_sylvestris_Heidest', level: 1, icon: 'group', arrow: 'right' },
  { name: 'Vaccinio_uliginosi_Pinetum_sylvestris_Torfstic', level: 1, icon: 'group', arrow: 'right' },
  { name: 'Biotope', level: 0, icon: 'group', arrow: 'right' },
  { name: 'Bodenarten', level: 0, icon: 'polygon', arrow: 'right', muted: true },
  { name: 'Baumfreie_offene_Moorbereiche', level: 0, icon: 'group', arrow: 'right', checked: true },
  { name: 'OpenStreetMap Standard', level: 0, icon: 'wms', arrow: 'down', muted: true },
  { name: 'WMS LGRB-BW BK50: Bodenkarte 1 : 50 000', level: 0, icon: 'wms', arrow: 'right', muted: true },
  { name: 'WMS LGRB-BW GK50: Geologische Karte 1 :', level: 0, icon: 'wms', arrow: 'right', muted: true },
];

const folders = [
  'Beide Biotope - Docs', 'Bilder_alt', 'csv-Importe', 'csv_exporte', 'Forst - WMS-Dienste', 'Forums-Beiträge', 'Fotos',
  'geopackage', 'geotiff_export', 'gpx-Exporte', 'gpx-Importe', 'Index', 'JPG-Import', 'kml-Exporte', 'models',
  'nicht georeferenzierte Kart', 'Offline-Karten', 'pdf', 'planlauf_terrain', 'plugins', 'QGIS + LIDAR - tipps & Tri',
  'Rechtliches', 'Shape-Exporte', 'Shapes', 'tiff_export', 'Tutorials und Docs', 'xlsx-Importe', 'xyz_importe',
];

const finds = [
  [934, 441], [1026, 422], [1088, 481], [926, 516], [1016, 526], [940, 563],
  [419, 778], [571, 775], [702, 779], [822, 772],
];

function Checkbox({ id, checked, label }: { id: string; checked?: boolean; label?: string }) {
  return (
    <span className="grid w-4 h-4 shrink-0">
      <input
        id={id}
        type="checkbox"
        defaultChecked={checked}
        aria-label={label}
        className="peer [grid-area:1/1] appearance-none w-4 h-4 border border-[#333] bg-white"
      />
      <svg viewBox="0 0 16 16" className="[grid-area:1/1] w-4 h-4 hidden peer-checked:block pointer-events-none" aria-hidden="true">
        <path d="M3 8l3.500 3.500L13 4.500" fill="none" stroke="#333" strokeWidth="1.4" />
      </svg>
    </span>
  );
}

function PanelHeader({ title }: { title: string }) {
  return (
    <div className="h-[31px] mt-px shrink-0 flex items-center pl-1 bg-[#dadada] border border-[#bcbcbc]">
      <h2 className="pt-[3px]">{title}</h2>
      <button aria-label="Andocken" className="ml-auto w-[25px] h-6 flex items-center justify-center">
        <svg viewBox="0 0 18 18" className="w-[18px] h-[18px]" aria-hidden="true">
          <path d="M6 6V2h10v8h-4M1.500 8h10v8h-10z" fill="none" stroke="#333" strokeWidth="2" />
          <path d="M5 2.500h12M1 9h11" stroke="#333" strokeWidth="3" />
        </svg>
      </button>
      <button aria-label="Schließen" className="w-[25px] h-6 flex items-center justify-center">
        <svg viewBox="0 0 18 18" className="w-[18px] h-[18px]" aria-hidden="true">
          <path d="M2 2l14 14M16 2L2 16" stroke="#333" strokeWidth="3.8" />
        </svg>
      </button>
    </div>
  );
}

function PanelTools({ items }: { items: string[] }) {
  return (
    <div className="h-7 shrink-0 flex items-center">
      {items.map((item, i) =>
        item === 'v' ? (
          <button key={i} aria-label="Mehr" className="w-4 flex justify-center"><Caret /></button>
        ) : (
          <button key={i} aria-label={item} className="w-[23px] flex justify-center">
            <Icon name={item} className="w-4 h-4" />
          </button>
        )
      )}
    </div>
  );
}

const indent = ['pl-0', 'pl-[25px]', 'pl-[50px]'];

function LayerRow({ node }: { node: LayerNode }) {
  const id = `layer-${node.name}`;
  return (
    <li className={`relative flex items-center h-6 ${indent[node.level]}`}>
      <span className="absolute right-0 top-0.5 w-1 h-5 bg-[#e3e3e3]" />
      <span className="w-6 shrink-0 flex justify-center">
        {node.arrow && <Chevron dir={node.arrow} color={node.arrow === 'down' ? '#404040' : '#a0a0a0'} />}
      </span>
      <div className={`relative flex grow min-w-0 h-full items-center ${node.selected ? 'bg-[#cde8ff]' : ''}`}>
        <span className="w-[25px] pl-1 shrink-0 flex">
          <Checkbox id={id} checked={node.checked} />
        </span>
        <label
          htmlFor={id}
          className={`flex grow min-w-0 h-full items-center pl-0.5 gap-[7px] whitespace-nowrap ${
            node.muted ? 'italic font-bold text-[15px] text-[#808080]' : ''
          } ${node.selected ? 'font-bold border border-dotted border-black' : ''}`}
        >
          <Icon name={node.icon} className="w-[18px] h-[18px]" />
          <span className={node.selected ? 'underline' : ''}>{node.name}</span>
        </label>
      </div>
      {node.selected && (
        <span className="absolute left-[55px] -top-0.5 w-[205px] h-[31px] z-10 border-4 border-[#fe0000] pointer-events-none" />
      )}
    </li>
  );
}

function LayerPanel() {
  return (
    <section className="w-[398px] shrink-0 flex flex-col">
      <PanelHeader title="Layer" />
      <PanelTools items={['brush', 'groupAdd', 'eye', 'funnel', 'expression', 'v', 'expand', 'collapse', 'removeLayer']} />
      <div className="grow min-h-0 flex flex-col bg-white border border-[#828790]">
        <ul className="grow min-h-0 overflow-hidden">
          {layers.map((node) => (
            <LayerRow key={node.name} node={node} />
          ))}
        </ul>
        <div className="h-5 shrink-0 flex items-center bg-[#f0f0f0]">
          <button aria-label="Nach links" className="w-[21px] flex justify-center"><Chevron dir="left" /></button>
          <div className="w-[279px] h-full bg-[#cdcdcd]" />
          <button aria-label="Nach rechts" className="ml-auto w-[21px] flex justify-center"><Chevron dir="right" /></button>
        </div>
      </div>
    </section>
  );
}

function FolderRow({ name, icon, arrow, nested }: { name: string; icon: string; arrow: Direction; nested?: boolean }) {
  return (
    <li className={`flex items-center h-6 shrink-0 whitespace-nowrap ${nested ? 'pl-[38px]' : 'pl-[13px]'}`}>
      <span className="w-6 shrink-0 flex justify-center">
        <Chevron dir={arrow} color={arrow === 'down' ? '#404040' : '#a0a0a0'} />
      </span>
      <Icon name={icon} className="w-[18px] h-[18px] ml-[5px] mr-[7px]" />
      {name}
    </li>
  );
}

function BrowserPanel() {
  return (
    <section className="w-[289px] shrink-0 flex flex-col">
      <PanelHeader title="Browser" />
      <PanelTools items={['addItem', 'refresh', 'funnel', 'collapse', 'info']} />
      <div className="grow min-h-0 flex flex-col bg-white border border-[#828790]">
        <div className="grow min-h-0 flex">
          <ul className="grow min-w-0 overflow-hidden">
            <FolderRow name="_QGIS für Pilzfreunde" icon="folderOpen" arrow="down" />
            {folders.map((name) => (
              <FolderRow key={name} name={name} icon={name.startsWith('QGIS') ? 'folderLink' : 'folder'} arrow="right" nested />
            ))}
            <FolderRow name="adobeTemp" icon="folder" arrow="right" />
          </ul>
          <div className="w-5 shrink-0 flex flex-col items-center bg-[#f0f0f0]">
            <button aria-label="Nach oben" className="h-[22px] flex items-center"><Chevron dir="up" /></button>
            <div className="mt-[101px] w-full h-[210px] bg-[#cdcdcd]" />
            <button aria-label="Nach unten" className="mt-auto h-6 flex items-center"><Chevron dir="down" /></button>
          </div>
        </div>
        <div className="h-5 shrink-0 flex items-center bg-[#f0f0f0] pr-[22px]">
          <button aria-label="Nach links" className="w-[21px] flex justify-center"><Chevron dir="left" /></button>
          <div className="ml-[18px] w-[129px] h-full bg-[#cdcdcd]" />
          <button aria-label="Nach rechts" className="ml-auto w-[21px] flex justify-center"><Chevron dir="right" /></button>
        </div>
      </div>
    </section>
  );
}

function MapCanvas() {
  return (
    <main className="relative grow min-w-0 mx-1.5 bg-white border border-[#828790] overflow-hidden">
      <svg className="absolute inset-0 w-full h-full" aria-label="Fundpunkte">
        <defs>
          <radialGradient id="shade">
            <stop offset="0" stopColor="#000" stopOpacity="0.12" />
            <stop offset="1" stopColor="#000" stopOpacity="0" />
          </radialGradient>
        </defs>
        {finds.map(([x, y]) => (
          <g key={`${x}-${y}`} transform={`translate(${x} ${y})`}>
            <circle cx="8" cy="7" r="13" fill="url(#shade)" />
            <circle r="3.500" fill="#f00" />
            <path d="M0-5V5M-5 0H5M-3.500-3.500L3.500 3.500M3.500-3.500L-3.500 3.500" stroke="#f00" strokeWidth="1.8" />
          </g>
        ))}
      </svg>
      <div className="absolute left-[347px] bottom-[22px] w-[181px] h-[46px] flex items-center justify-center rounded-xl border border-black bg-[#ffff80] font-['Liberation_Sans',sans-serif] text-2xl font-bold text-black pr-1">
        Bild 2
      </div>
    </main>
  );
}

function GeoMenu() {
  return (
    <div className="absolute left-[283px] -top-1 z-20 w-[308px] p-[3px] bg-[#f0f0f0] border border-[#c4c4c4] shadow-[4px_4px_3px_-1px_rgba(0,0,0,0.5)]">
      {geoMenu.map(([label, icon], i) => (
        <button key={label} className={`flex w-full items-center h-[26px] pl-[3px] ${i === 0 ? 'bg-[#91c9f7]' : ''}`}>
          <Icon name={icon} className="w-[18px] h-[18px]" />
          <span className="ml-[13px]">{label}</span>
          {i === 0 && (
            <svg viewBox="0 0 74 12" className="w-[74px] h-3 ml-4" aria-hidden="true">
              <path d="M15 6h58" stroke="#f00" strokeWidth="2" />
              <path d="M0 6l19-6-3 6 3 6z" fill="#f00" />
            </svg>
          )}
        </button>
      ))}
    </div>
  );
}

function VectorMenu() {
  return (
    <div className="absolute left-0 top-full z-20 w-[293px] p-0.5 bg-[#f0f0f0] border border-[#c4c4c4] shadow-[4px_4px_3px_-1px_rgba(0,0,0,0.5)]">
      {vectorMenu.map((item) => {
        const open = item.label === 'Geoverarbeitungswerkzeuge';
        return (
          <div key={item.label} className="relative">
            <button className={`flex w-full items-center pr-2.5 ${item.tall ? 'h-[25px]' : 'h-6'} ${open ? 'bg-[#91c9f7]' : ''}`}>
              <span className="w-[34px] pl-0.5 flex">{item.icon && <Icon name={item.icon} className="w-5 h-5" />}</span>
              {item.label}
              {item.sub && (
                <svg viewBox="0 0 5 8" className="w-[5px] h-2 ml-auto" aria-hidden="true">
                  <path d="M0 0l5 4-5 4z" fill="#000" />
                </svg>
              )}
            </button>
            {open && <GeoMenu />}
          </div>
        );
      })}
    </div>
  );
}

function Spin({ id, value, width }: { id: string; value: string; width: string }) {
  return (
    <span className={`${width} h-[22px] flex items-center bg-white border border-[#7a7a7a] pr-0.5`}>
      <input id={id} defaultValue={value} className="grow min-w-0 pl-0.5 bg-transparent outline-none" />
      <span className="flex flex-col w-[14px] border border-[#b5b5b5] bg-[#ececec]">
        <button aria-label="Mehr" className="h-2 flex items-center justify-center">
          <svg viewBox="0 0 8 5" className="w-2 h-[5px]"><path d="M0 5h8L4 0z" /></svg>
        </button>
        <button aria-label="Weniger" className="h-2 flex items-center justify-center border-t border-[#b5b5b5]">
          <svg viewBox="0 0 8 5" className="w-2 h-[5px]"><path d="M0 0h8L4 5z" /></svg>
        </button>
      </span>
    </span>
  );
}

function StatusBar() {
  return (
    <footer className="h-[31px] pt-px shrink-0 flex items-center bg-[#f0f0f0] font-['DejaVu_Sans_Condensed','DejaVu_Sans',sans-serif] text-[13px] whitespace-nowrap">
      <div className="w-[278px] h-[22px] flex items-center bg-white border border-l-0 border-[#7a7a7a] pl-2">
        <Icon name="search" className="w-3 h-3" />
        <input aria-label="Suche" placeholder="Zu suchender Typ (Strg+K)" className="grow ml-2 outline-none placeholder:text-[#808080]" />
      </div>
      <label htmlFor="coord" className="ml-auto">Koordinate</label>
      <input id="coord" defaultValue="473665.03,5397489.70" className="w-[146px] h-[22px] ml-1 pl-1.5 bg-white border border-[#7a7a7a]" />
      <button aria-label="Verfolgen" className="ml-0.5"><Icon name="tracker" className="w-5 h-5" /></button>
      <label htmlFor="scale" className="ml-3">Maßstab</label>
      <span className="grid ml-0.5">
        <select id="scale" className="[grid-area:1/1] appearance-none w-[91px] h-[22px] pl-1 bg-white border border-[#7a7a7a]">
          <option>1:250</option>
        </select>
        <svg viewBox="0 0 10 6" className="[grid-area:1/1] justify-self-end self-center w-2.5 h-1.5 mr-1.5 pointer-events-none" aria-hidden="true">
          <path d="M0 0l5 5 5-5" fill="none" stroke="#444" />
        </svg>
      </span>
      <button aria-label="Sperren" className="ml-2.5"><Icon name="lock" className="w-[18px] h-[18px]" /></button>
      <label htmlFor="zoom" className="ml-2 mr-0.5">Vergrößerung</label>
      <Spin id="zoom" value="100%" width="w-[88px]" />
      <label htmlFor="rotation" className="ml-2 mr-2">Drehung</label>
      <Spin id="rotation" value="0,0 °" width="w-[86px]" />
      <span className="ml-1.5 flex"><Checkbox id="render" checked /></span>
      <label htmlFor="render" className="ml-1">Zeichnen</label>
      <button className="relative z-10 h-[39px] ml-0.5 -my-1 w-[116px] flex items-center justify-center gap-1 border-4 border-[#fe0000]">
        <Icon name="crs" className="w-5 h-5" />
        EPSG:25832
      </button>
      <button aria-label="Meldungen" className="ml-2"><Icon name="bubble" className="w-5 h-5" /></button>
      <button aria-label="Erweiterungen" className="ml-3"><Icon name="puzzle" className="w-[22px] h-[22px]" /></button>
      <svg viewBox="0 0 10 10" className="w-2.5 h-2.5 ml-2 mr-1 self-end mb-0.5" aria-hidden="true">
        <path d="M8 0h2v2H8zM4 4h2v2H4zM8 4h2v2H8zM0 8h2v2H0zM4 8h2v2H4zM8 8h2v2H8z" fill="#b5b5b5" />
      </svg>
    </footer>
  );
}

export default function App() {
  return (
    <div className="h-screen flex flex-col overflow-hidden bg-[#1f3140] font-['Noto_Sans',sans-serif] text-[14px] text-[#111]">
      <div className="grow min-h-0 flex bg-[#e2e2e2]">
        <div className="grow min-w-0 flex flex-col bg-[#f0f0f0] border-t border-r border-[#5f6a75]">
          <header className="h-[36px] shrink-0 flex items-center bg-white">
            <svg viewBox="0 0 24 24" className="w-5 h-5 ml-1" aria-hidden="true">
              <circle cx="11.500" cy="11.500" r="8.800" fill="none" stroke="#7fae2e" strokeWidth="5" />
              <path d="M12 12l10 11" stroke="#5c9226" strokeWidth="5" />
              <path d="M9 8l6 1 1 5-4 1z" fill="#ee7d22" />
            </svg>
            <h1 className="ml-[5px] text-[15px]">QGIS für Pilzfreunde 33.qgs - QGIS</h1>
            <div className="ml-auto flex">
              {['M0 6h12', 'M.5.5h11v11H.5z', 'M0 0l12 12M12 0L0 12'].map((d, i) => (
                <button key={d} aria-label={['Minimieren', 'Maximieren', 'Beenden'][i]} className="w-[59px] h-8 flex items-center justify-center">
                  <svg viewBox="0 0 12 12" className="w-3 h-3 overflow-visible"><path d={d} fill="none" stroke="#000" /></svg>
                </button>
              ))}
            </div>
          </header>
          <nav className="h-[27px] shrink-0 flex items-center bg-white border-b border-[#e9e9e9]">
            {menus.map((menu, i) => (
              <div key={menu} className="relative h-full">
                {menu === 'Vektor' ? (
                  <button className="h-full px-[7px] pt-px bg-[#cce8ff] border border-[#99d1ff]">{menu}</button>
                ) : (
                  <button className={`h-full pt-0.5 pr-[7px] ${i === 0 ? 'pl-0.5' : 'pl-2'}`}>{menu}</button>
                )}
                {menu === 'Vektor' && <VectorMenu />}
              </div>
            ))}
          </nav>

          <div className="h-[34px] shrink-0 flex items-center border-b border-[#b8b8b8]">
            <Toolbar first items={['newFile', 'open', 'save', 'layout', 'layoutManager', 'style']} />
            <Toolbar
              last
              active={['hand', 'mapTips']}
              items={['hand', 'panTo', 'zoomIn', 'zoomOut', 'zoomFull', 'zoomSelection', 'zoomLayer', 'zoomNative', 'zoomLast', '_', 'v', 'mapTheme', 'v', 'deselect', 'table', 'abacus', 'gear', 'sigma', 'ruler', 'v', 'mapTips', 'annotation', 'v']}
            />
          </div>
          <div className="h-[34px] shrink-0 flex items-center border-b border-[#b8b8b8]">
            <Toolbar first items={['dataSource', 'geopackage', 'newShape', 'spatialite', 'memory', '|', 'virtual']} />
            <Toolbar items={['pencils', 'pencil', 'saveEdits', 'points', 'vertexTool', 'v', 'attributes', 'trash', 'scissors', '_', 'labelPin', 'labelShow', 'labelMove', 'labelRotate', 'labelEdit']} />
            <Toolbar items={['plugGreen', 'idArrow', 'landscape', 'database']} />
            <Toolbar items={['globeDown', 'globeSearch', 'binoculars']} />
            <Toolbar items={['python', 'kml', 'html', 'rasterAdd', 'colorGrid', 'blueGrid']} />
            <Toolbar items={['help']} />
            <Toolbar last items={['crosshair']} />
          </div>
          <div className="h-[34px] shrink-0 flex items-center border-b border-[#b8b8b8]">
            <Toolbar first last items={['advDigitize', 'movePoints', 'v', 'rotate', 'simplify', 'addRing', 'addPart', 'fillRing', 'deleteRing', 'deletePart', 'reshape', 'offset', 'reverse', 'trim', 'split', 'split']} />
          </div>
          <div className="h-[34px] shrink-0 flex items-center border-b border-[#b8b8b8]">
            <Toolbar first items={['osm', 'osmPen']} />
            <Toolbar last items={['camera', 'imageSelect']} />
          </div>

          <div className="grow min-h-0 flex">
            <aside className="w-[45px] shrink-0 overflow-hidden border-b border-[#b8b8b8]">
              <div className="mt-1 mb-1.5 border-t-2 border-dotted border-[#b5b5b5]" />
              {sideTools.map(([name, caret]) => (
                <div key={name} className="flex items-center h-[30px]">
                  <button aria-label={name} className="w-[27px] h-full"><Icon name={name} /></button>
                  {caret && <button aria-label="Mehr" className="w-4 flex justify-center"><Caret /></button>}
                </div>
              ))}
              <button aria-label="tableAdd" className="ml-2 h-[30px] flex items-center"><Icon name="tableAdd" /></button>
            </aside>
            <LayerPanel />
            <MapCanvas />
            <BrowserPanel />
          </div>
          <StatusBar />
        </div>
        <div className="w-1 shrink-0" />
      </div>
      <div className="h-1 shrink-0 flex bg-[#c9cdd0]">
        <div className="w-[61%] bg-[#0a86c4]" />
      </div>
      <div className="h-1.5 shrink-0" />
    </div>
  );
}
